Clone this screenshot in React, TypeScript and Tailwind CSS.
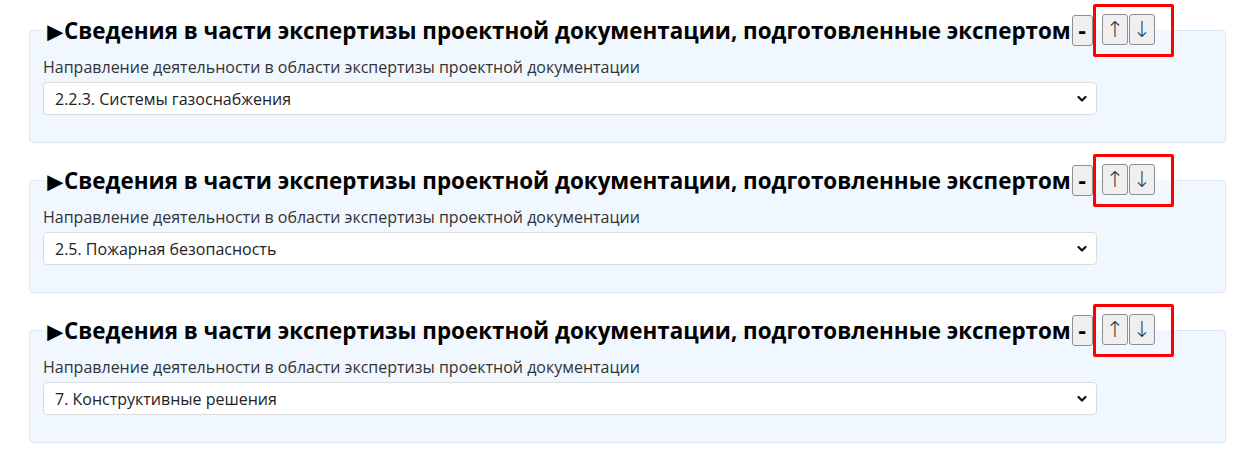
import { useState } from "react";

const sections = [
  { id: 1, value: "2.2.3. Системы газоснабжения" },
  { id: 2, value: "2.5. Пожарная безопасность" },
  { id: 3, value: "7. Конструктивные решения" },
];

const Chevron = () => (
  <svg
    className="pointer-events-none absolute right-[10px] top-1/2 -translate-y-1/2"
    width="10"
    height="7"
    viewBox="0 0 10 7"
    fill="none"
  >
    <path d="M1.5 1.5 5 5l3.5-3.5" stroke="#111" strokeWidth="2.2" strokeLinecap="round" strokeLinejoin="round" />
  </svg>
);

function ExpertSection({ value }: { value: string }) {
  const [selected, setSelected] = useState(value);

  return (
    <fieldset className="mb-[11px] w-[1197px] rounded-[4px] border border-[#d9e7f8] bg-[#f0f7ff] px-[13px] pb-[27px]">
      <legend className="flex items-center px-[2px]">
        <span className="font-['Open_Sans',sans-serif] text-[22.4px] font-bold leading-[30px] text-black">
          <span className="-ml-[3px] inline-block w-[22px] origin-left scale-[1.22] font-['Liberation_Sans',sans-serif] text-[22px] leading-none">
            ►
          </span>
          Сведения в части экспертизы проектной документации, подготовленные экспертом
        </span>
        <button
          type="button"
          className="ml-[1px] flex h-[31px] w-[21px] items-center justify-center rounded-[3px] border border-[#8f8f8f] bg-[#efefef] font-['DejaVu_Sans',sans-serif] text-[20px] font-bold leading-none text-black"
        >
          -
        </button>
        <span className="flex rounded-[2px] border-[3px] border-[#ff0000] pb-[9px] pl-[6px] pr-[16px] pt-[7px]">
          <button
            type="button"
            className="flex h-[31px] w-[26px] items-center justify-center rounded-[3px] border border-[#8f8f8f] bg-[#efefef] font-['DejaVu_Sans',sans-serif] text-[22px] font-light leading-none text-[#333]"
          >
            ↑
          </button>
          <button
            type="button"
            className="ml-[1px] flex h-[31px] w-[26px] items-center justify-center rounded-[3px] border border-[#8f8f8f] bg-[#efefef] font-['DejaVu_Sans',sans-serif] text-[22px] font-light leading-none text-[#333]"
          >
            ↓
          </button>
        </span>
      </legend>

      <label className="mb-[5px] block font-['Open_Sans',sans-serif] text-[16px] leading-[20px] text-[#333]">
        Направление деятельности в области экспертизы проектной документации
      </label>
      <div className="relative w-[1054px]">
        <select
          value={selected}
          onChange={(e) => setSelected(e.target.value)}
          className="h-[33px] w-full appearance-none rounded-[4px] border border-[#dcdcdc] bg-white pl-[11px] pr-[30px] font-['Open_Sans',sans-serif] text-[16px] text-[#222] outline-none"
        >
          <option>{selected}</option>
        </select>
        <Chevron />
      </div>
    </fieldset>
  );
}

export default function App() {
  return (
    <div className="min-h-[449px] bg-white pl-[29px] pt-[4px]">
      {sections.map((s) => (
        <ExpertSection key={s.id} value={s.value} />
      ))}
    </div>
  );
}
